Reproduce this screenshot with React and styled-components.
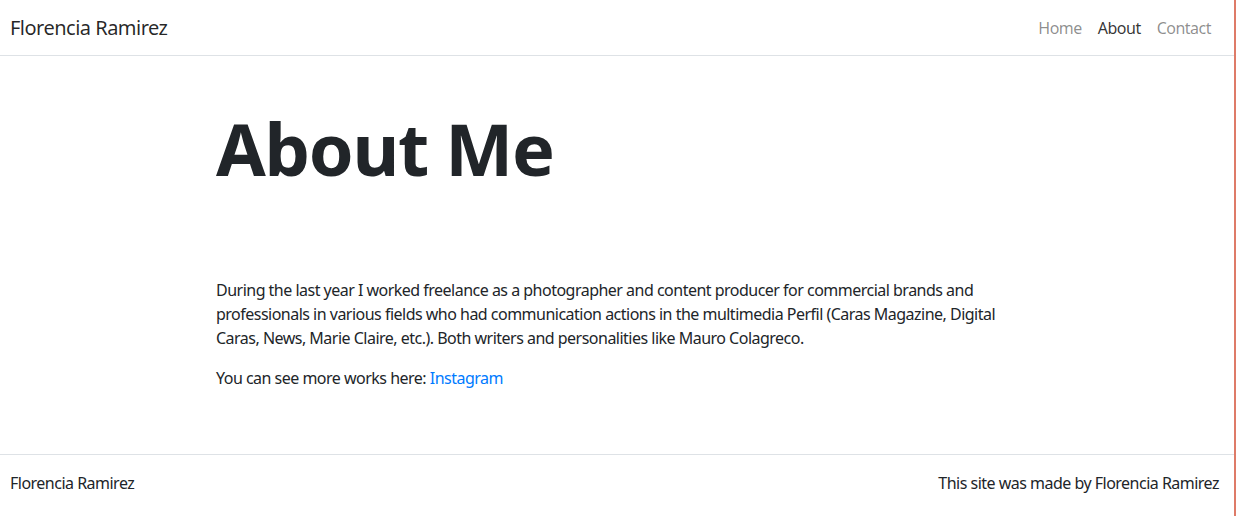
import React from "react";
import styled, { createGlobalStyle } from "styled-components";

const GlobalStyle = createGlobalStyle`
  html, body {
    margin: 0;
    padding: 0;
    background: #fff;
  }
  body {
    font-family: "Segoe UI", "Noto Sans", "Liberation Sans", sans-serif;
    font-size: 16px;
    line-height: 1.5;
    letter-spacing: -0.032em;
    color: #212529;
  }
`;

const navLinks = [
  { label: "Home", active: false },
  { label: "About", active: true },
  { label: "Contact", active: false },
];

function App() {
  return (
    <Page>
      <GlobalStyle />
      <Main>
        <Navbar>
          <Brand href="#">Florencia Ramirez</Brand>
          <NavList>
            {navLinks.map((link) => (
              <NavLink key={link.label} href="#" active={link.active ? 1 : 0}>
                {link.label}
              </NavLink>
            ))}
          </NavList>
        </Navbar>

        <Content>
          <Title>About Me</Title>
          <Text>
            During the last year I worked freelance as a photographer and content
            producer for commercial brands and professionals in various fields who
            had communication actions in the multimedia Perfil (Caras Magazine,
            Digital Caras, News, Marie Claire, etc.). Both writers and
            personalities like Mauro Colagreco.
          </Text>
          <Text>
            You can see more works here: <Link href="#">Instagram</Link>
          </Text>
        </Content>

        <Footer>
          <span>Florencia Ramirez</span>
          <span>This site was made by Florencia Ramirez</span>
        </Footer>
      </Main>
      <EdgeLine />
    </Page>
  );
}

export default App;

const Page = styled.div`
  display: flex;
  min-height: 516px;
`;

const Main = styled.div`
  width: 1234px;
  display: flex;
  flex-direction: column;
`;

const EdgeLine = styled.div`
  width: 2px;
  background: #de7b68;
`;

const Navbar = styled.nav`
  display: flex;
  align-items: center;
  justify-content: space-between;
  height: 55px;
  padding: 0 15px 0 10px;
  border-bottom: 1px solid #dee2e6;
`;

const Brand = styled.a`
  font-size: 20px;
  line-height: 30px;
  color: rgba(0, 0, 0, 0.85);
  text-decoration: none;
`;

const NavList = styled.div`
  display: flex;
`;

const NavLink = styled.a`
  padding: 8px;
  font-size: 16px;
  line-height: 24px;
  text-decoration: none;
  color: ${(props) => (props.active ? "rgba(0, 0, 0, 0.8)" : "rgba(0, 0, 0, 0.45)")};
`;

const Content = styled.main`
  width: 802px;
  margin: 0 auto;
  padding: 49px 0 48px;
`;

const Title = styled.h1`
  margin: 0 0 87px;
  font-size: 72px;
  font-weight: 700;
  line-height: 1.2;
  letter-spacing: -0.018em;
  color: #212529;
`;

const Text = styled.p`
  margin: 0 0 16px;
  font-size: 16px;
  line-height: 24px;
`;

const Link = styled.a`
  color: #007bff;
  text-decoration: none;
`;

const Footer = styled.footer`
  display: flex;
  justify-content: space-between;
  padding: 16px 15px 16px 10px;
  border-top: 1px solid #dee2e6;
  font-size: 16px;
  line-height: 24px;
`;
